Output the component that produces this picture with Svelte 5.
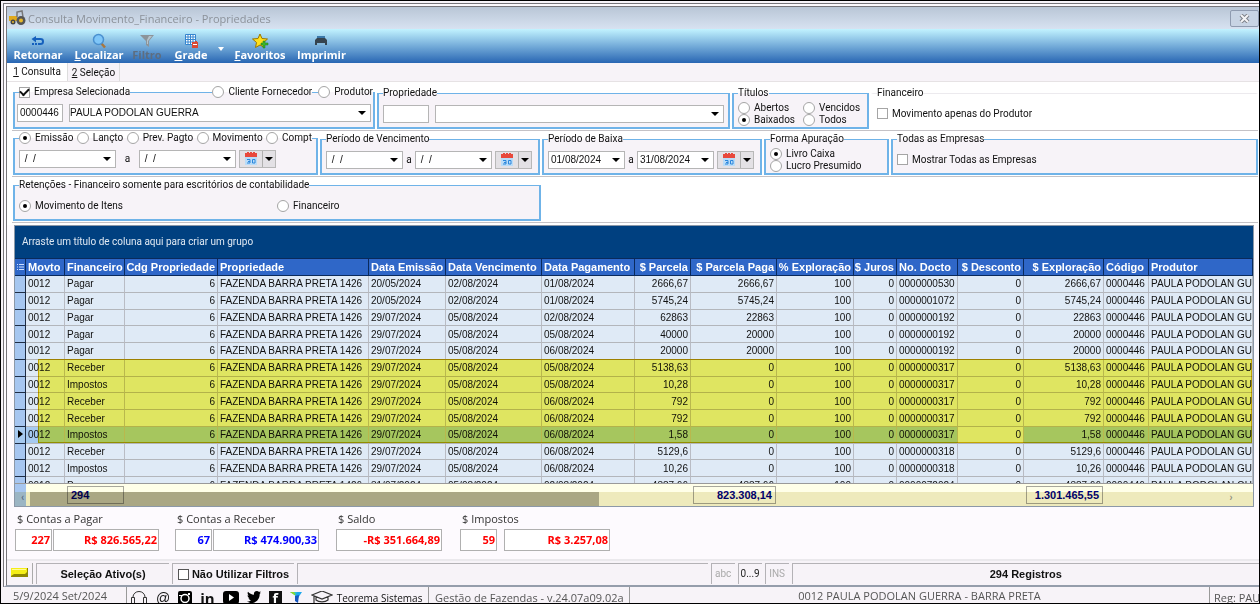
<script>
	let filters = $state({
		company: true,
		person: '',
		status: 'Baixados',
		date: 'Emissão',
		basis: 'Livro Caixa',
		withholding: 'Movimento de Itens',
		producerOnly: false,
		allCompanies: false,
		noFilters: false,
	});

	const columns = [
		{ title: 'Movto', width: 39 },
		{ title: 'Financeiro', width: 60 },
		{ title: 'Cdg Propriedade', width: 93, num: true },
		{ title: 'Propriedade', width: 151 },
		{ title: 'Data Emissão', width: 77 },
		{ title: 'Data Vencimento', width: 96 },
		{ title: 'Data Pagamento', width: 93 },
		{ title: '$ Parcela', width: 56, num: true },
		{ title: '$ Parcela Paga', width: 86, num: true },
		{ title: '% Exploração', width: 77, num: true },
		{ title: '$ Juros', width: 43, num: true },
		{ title: 'No. Docto', width: 61 },
		{ title: '$ Desconto', width: 66, num: true },
		{ title: '$ Exploração', width: 80, num: true },
		{ title: 'Código', width: 45 },
		{ title: 'Produtor' },
	];

	const footer = { 1: '294', 8: '823.308,14', 13: '1.301.465,55' };
	const template = '11px ' + columns.map((c) => (c.width ? c.width + 'px' : '1fr')).join(' ');

	const entries = [
		['Pagar', '20/05/2024', '02/08/2024', '01/08/2024', '2666,67', '2666,67', '0000000530', '2666,67'],
		['Pagar', '20/05/2024', '02/08/2024', '01/08/2024', '5745,24', '5745,24', '0000001072', '5745,24'],
		['Pagar', '29/07/2024', '05/08/2024', '02/08/2024', '62863', '22863', '0000000192', '22863'],
		['Pagar', '29/07/2024', '05/08/2024', '05/08/2024', '40000', '20000', '0000000192', '20000'],
		['Pagar', '29/07/2024', '05/08/2024', '06/08/2024', '20000', '20000', '0000000192', '20000'],
		['Receber', '29/07/2024', '05/08/2024', '05/08/2024', '5138,63', '0', '0000000317', '5138,63'],
		['Impostos', '29/07/2024', '05/08/2024', '05/08/2024', '10,28', '0', '0000000317', '10,28'],
		['Receber', '29/07/2024', '05/08/2024', '06/08/2024', '792', '0', '0000000317', '792'],
		['Receber', '29/07/2024', '05/08/2024', '06/08/2024', '792', '0', '0000000317', '792'],
		['Impostos', '29/07/2024', '05/08/2024', '06/08/2024', '1,58', '0', '0000000317', '1,58'],
		['Receber', '29/07/2024', '05/08/2024', '06/08/2024', '5129,6', '0', '0000000318', '5129,6'],
		['Impostos', '29/07/2024', '05/08/2024', '06/08/2024', '10,26', '0', '0000000318', '10,26'],
		['Pagar', '31/07/2024', '05/08/2024', '02/08/2024', '4387,66', '4387,66', '0000072024', '4387,66'],
	];
	const rows = entries.map(([kind, issued, due, paid, value, valuePaid, doc, share]) => [
		'0012', kind, '6', 'FAZENDA BARRA PRETA 1426', issued, due, paid, value, valuePaid,
		'100', '0', doc, '0', share, '0000446', 'PAULA PODOLAN GUERRA',
	]);
	let current = $state(9);

	const totals = [
		{ title: '$ Contas a Pagar', count: '227', value: 'R$ 826.565,22', width: 160 },
		{ title: '$ Contas a Receber', count: '67', value: 'R$ 474.900,33', width: 161, blue: true },
		{ title: '$ Saldo', value: '-R$ 351.664,89', width: 124 },
		{ title: '$ Impostos', count: '59', value: 'R$ 3.257,08', width: 151, wide: true },
	];
</script>

{#snippet radio(group, value)}
	<label class="opt"><input type="radio" name={group} {value} bind:group={filters[group]}>{value}</label>
{/snippet}

{#snippet dateBox(label, value)}
	<div class="combo">
		<input type="text" aria-label={label} {value}>
		<button class="arrow" aria-label="Abrir calendário"></button>
	</div>
{/snippet}

{#snippet calendar()}
	<div class="cal">
		<button aria-label="Escolher período">
			<svg width="14" height="13" viewBox="0 0 14 13">
				<path fill="#b9dcf8" d="M1 5h12v8H1z" />
				<path fill="#e8493c" d="M1 1h2V0h2v1h1V0h2v1h1V0h2v1h2v4H1z" />
				<path fill="none" stroke="#2a86dc" d="M3 7.5h3v3.500H3M4 9.500h2M8.500 7.500h2.500v3.500H8.500z" />
			</svg>
		</button>
		<button class="arrow" aria-label="Mais períodos"></button>
	</div>
{/snippet}

<div class="screen">
	<div class="window">
		<header class="title">
			<svg width="17" height="16" viewBox="0 0 17 16">
				<path fill="#e0a91c" d="M0 6h8v5H0z" />
				<path fill="none" stroke="#777" stroke-width="1.500" d="M8 7V2l5-1 1 6" />
				<circle cx="12" cy="10.500" r="4.500" fill="#555" /><circle cx="12" cy="10.500" r="2" fill="#e8b92c" />
				<circle cx="4" cy="12" r="2.500" fill="#444" /><circle cx="4" cy="12" r="1" fill="#e8b92c" />
			</svg>
			<h1>Consulta Movimento_Financeiro - Propriedades</h1>
			<button class="close" aria-label="Fechar">
				<svg width="11" height="9" viewBox="0 0 11 9">
					<path stroke="#7c8088" stroke-width="4" d="M2 1l7 7M9 1L2 8" />
					<path stroke="#f4f4f6" stroke-width="2" d="M2 1l7 7M9 1L2 8" />
				</svg>
			</button>
		</header>

		<nav class="toolbar">
			<button class="back">
				<svg width="16" height="16" viewBox="0 0 16 16">
					<path fill="#1560bd" d="M6 3v2h4c3 0 4 1 4 3.500S13 12 10 12H8V10h2c1.500 0 2-.5 2-1.500S11.500 7 10 7H6v2.500L1.500 6z" />
					<path fill="#1560bd" d="M2 10h2v2H2zM5 10h2v2H5z" />
				</svg>
				<span>Retornar</span>
			</button>
			<button class="find">
				<svg width="16" height="16" viewBox="0 0 16 16">
					<path stroke="#a9773e" stroke-width="2.500" d="M10 10l4 4.500" />
					<circle cx="7.500" cy="6.500" r="5" fill="#7fc6f8" stroke="#4a90cf" stroke-width="1.500" />
				</svg>
				<span><u>L</u>ocalizar</span>
			</button>
			<button class="filter" disabled>
				<svg width="16" height="16" viewBox="0 0 16 16">
					<path fill="#8c949a" d="M1 2h14L10 8v6l-3-2V8z" /><path fill="#b5c3cc" d="M10 3h3l-4 5v3H8V7z" />
				</svg>
				<span>Filtro</span>
			</button>
			<button class="grade">
				<svg width="16" height="16" viewBox="0 0 16 16">
					<path fill="#fff" stroke="#3585cf" d="M2.500 1.500h10v10h-10zM5 1.500v10M7.500 1.500v10M10 1.500v10M2.500 4h10M2.500 6.500h10M2.500 9h10" />
					<path fill="#d94a35" d="M9 9h3V8h2v1h1v6H9z" /><path fill="#fff" d="M10 11h4v1h-4z" />
				</svg>
				<span><u>G</u>rade</span>
			</button>
			<button class="more" aria-label="Mais opções de grade"></button>
			<button class="fav">
				<svg width="17" height="16" viewBox="0 0 17 16">
					<path fill="#ffe01b" stroke="#9a7600" d="M8 1l2 4.500 5.500.5-4 3.500 1 5L8 12l-4.500 2.500 1-5-4-3.500L6 5.500z" />
					<path fill="#3db32b" stroke="#1f7d18" stroke-width=".5" d="M11 8h2v2h3v2h-3v3h-2v-3H9v-2h2z" />
				</svg>
				<span><u>F</u>avoritos</span>
			</button>
			<button class="print">
				<svg width="16" height="16" viewBox="0 0 16 16">
					<path fill="#3b78a8" d="M4 3h8v4H4z" /><path fill="#36434e" d="M2 7l2-2h8l2 2v5H2z" /><path fill="#84b7dc" d="M4 10h8v2H4z" />
				</svg>
				<span>Imprimir</span>
			</button>
		</nav>

		<nav class="tabs">
			<button class="on"><u>1</u> Consulta</button>
			<button><u>2</u> Seleção</button>
		</nav>

		<form onsubmit={(e) => e.preventDefault()}>
			<div class="line">
				<fieldset class="company">
					<legend class="full">
						<label class="opt"><input type="checkbox" bind:checked={filters.company}>Empresa Selecionada</label>
						<i></i>
						{@render radio('person', 'Cliente Fornecedor')}
						<i class="short"></i>
						{@render radio('person', 'Produtor')}
					</legend>
					<div class="fields">
						<input class="code" type="text" aria-label="Código da empresa" value="0000446">
						<div class="combo grow">
							<select aria-label="Empresa"><option>PAULA PODOLAN GUERRA</option></select>
							<span class="arrow"></span>
						</div>
					</div>
				</fieldset>
				<fieldset class="property">
					<legend>Propriedade</legend>
					<div class="fields">
						<input class="code" type="text" aria-label="Código da propriedade">
						<div class="combo grow">
							<select aria-label="Propriedade"><option></option></select>
							<span class="arrow"></span>
						</div>
					</div>
				</fieldset>
				<fieldset class="status">
					<legend>Títulos</legend>
					<div class="options two">
						{@render radio('status', 'Abertos')}
						{@render radio('status', 'Vencidos')}
						{@render radio('status', 'Baixados')}
						{@render radio('status', 'Todos')}
					</div>
				</fieldset>
				<fieldset class="plain grow">
					<legend>Financeiro</legend>
					<label class="opt"><input type="checkbox" bind:checked={filters.producerOnly}>Movimento apenas do Produtor</label>
				</fieldset>
			</div>

			<div class="line">
				<fieldset class="period">
					<legend class="full kinds">
						{#each ['Emissão', 'Lançto', 'Prev. Pagto', 'Movimento', 'Compt'] as kind}
							{@render radio('date', kind)}
						{/each}
					</legend>
					<div class="fields dates">
						{@render dateBox('Data inicial', ' /  /')}
						<span>a</span>
						{@render dateBox('Data final', ' /  /')}
						{@render calendar()}
					</div>
				</fieldset>
				<fieldset class="due">
					<legend>Período de Vencimento</legend>
					<div class="fields dates">
						{@render dateBox('Vencimento inicial', ' /  /')}
						<span>a</span>
						{@render dateBox('Vencimento final', ' /  /')}
						{@render calendar()}
					</div>
				</fieldset>
				<fieldset class="due">
					<legend>Período de Baixa</legend>
					<div class="fields dates">
						{@render dateBox('Baixa inicial', '01/08/2024')}
						<span>a</span>
						{@render dateBox('Baixa final', '31/08/2024')}
						{@render calendar()}
					</div>
				</fieldset>
				<fieldset class="basis">
					<legend>Forma Apuração</legend>
					<div class="options">
						{@render radio('basis', 'Livro Caixa')}
						{@render radio('basis', 'Lucro Presumido')}
					</div>
				</fieldset>
				<fieldset class="all grow">
					<legend>Todas as Empresas</legend>
					<label class="opt"><input type="checkbox" bind:checked={filters.allCompanies}>Mostrar Todas as Empresas</label>
				</fieldset>
			</div>

			<div class="line">
				<fieldset class="withhold">
					<legend>Retenções - Financeiro somente para escritórios de contabilidade</legend>
					<div class="options halves">
						{@render radio('withholding', 'Movimento de Itens')}
						{@render radio('withholding', 'Financeiro')}
					</div>
				</fieldset>
			</div>
		</form>

		<section class="grid">
			<div class="group">Arraste um título de coluna aqui para criar um grupo</div>
			<div class="scroller">
				<table>
					<colgroup>
						<col style="width: 11px">
						{#each columns as col}
							<col style={col.width ? `width: ${col.width}px` : ''}>
						{/each}
					</colgroup>
					<thead>
						<tr>
							<th class="handle"><svg width="7" height="8" viewBox="0 0 7 8"><path stroke="#cfe0ff" d="M0 1.500h1M2 1.500h5M0 4h1M2 4h5M0 6.500h1M2 6.500h5" /></svg></th>
							{#each columns as col}
								<th class:num={col.num}>{col.title}</th>
							{/each}
						</tr>
					</thead>
					<tbody>
						{#each rows as row, i}
							<tr class:current={i === current} onclick={() => (current = i)}>
								<td class="handle"></td>
								{#each row as cell, c}
									<td class:num={columns[c].num} class:focus={c === 12}>{cell}</td>
								{/each}
							</tr>
						{/each}
					</tbody>
				</table>
				<div class="marker"></div>
			</div>
			<div class="sums" style="grid-template-columns: {template}">
				<span class="handle"></span>
				{#each columns as col, c}
					{#if footer[c]}
						<output class:num={col.num}>{footer[c]}</output>
					{:else}
						<span></span>
					{/if}
				{/each}
				<div class="hbar"><b>‹</b><div class="thumb"></div><b class="next">›</b></div>
			</div>
		</section>

		<section class="totals">
			{#each totals as t}
				<div class="total" class:blue={t.blue} class:wide={t.wide} style="width: {t.width}px">
					<h2>{t.title}</h2>
					<div>
						{#if t.count}<output class="qty">{t.count}</output>{/if}
						<output>{t.value}</output>
					</div>
				</div>
			{/each}
		</section>

		<footer class="status-bar">
			<button class="state" aria-label="Seleção"><svg width="17" height="9" viewBox="0 0 17 9"><path fill="#8f8700" d="M0 0h17v9H0z" /><path fill="#f5ee16" d="M0 0h16v4l-2 2H3l-3 2z" /><path fill="#fffb9c" d="M1 1h14v1H1z" /></svg></button>
			<span class="pane active">Seleção Ativo(s)</span>
			<span class="pane nofilter"><label class="opt"><input type="checkbox" bind:checked={filters.noFilters}>Não Utilizar Filtros</label></span>
			<span class="pane blank"></span>
			<span class="pane key">abc</span>
			<span class="pane key lit">0...9</span>
			<span class="pane key">INS</span>
			<span class="pane records">294 Registros</span>
		</footer>
	</div>

	<footer class="app-bar">
		<time>5/9/2024 Set/2024</time>
		<div class="links">
			<a href="#suporte" aria-label="Suporte"><svg width="18" height="17" viewBox="0 0 18 17"><path fill="none" stroke="#333" d="M3 7V6a6 5.500 0 0 1 12 0v1M1.500 6.500h3v6h-3zM13.500 6.500h3v6h-3z" /></svg></a>
			<a href="#email" class="at">@</a>
			<a href="#instagram" aria-label="Instagram"><svg width="14" height="14" viewBox="0 0 14 14"><rect width="14" height="14" rx="2" /><circle cx="7" cy="7.500" r="4" fill="none" stroke="#fff" stroke-width="1.500" /><path fill="#fff" d="M10 2h2v2h-2zM1 4h3v1H1z" /></svg></a>
			<a href="#linkedin" class="in">in</a>
			<a href="#youtube" aria-label="YouTube"><svg width="16" height="13" viewBox="0 0 16 13"><rect width="16" height="13" rx="3" /><path fill="#fff" d="M6 3l5 3.500L6 10z" /></svg></a>
			<a href="#twitter" aria-label="Twitter"><svg width="14" height="12" viewBox="0 0 14 12"><path d="M0 10.500c2 0 3-.4 4-1.200C2.700 9 2 8.300 1.500 7.200h1.200C1.200 6.700.6 5.500.6 4.200l1.200.4C.5 3.500.3 2 1 .8c1.600 1.800 3.500 2.800 6 3C6.600 1.500 8 0 9.800 0c1 0 1.600.3 2.200.9L13.700.3 12.700 2 14 1.600l-1.300 1.500C12.700 8 9.500 12 4.500 12 2.800 12 1.300 11.400 0 10.500z" /></svg></a>
			<a href="#facebook" class="fb">f</a>
			<a href="#teorema" aria-label="Teorema"><svg width="13" height="13" viewBox="0 0 13 13"><path fill="#35c6c0" d="M0 1h8L6 5z" /><path fill="#8bd82b" d="M0 1h4l2 4z" /><path fill="#1ca7ec" d="M7 1h5l-4 6-3-2z" /><path fill="#1557c0" d="M5 5l4-1-1 8-3-2z" /></svg></a>
			<a href="#cursos" aria-label="Cursos"><svg width="22" height="15" viewBox="0 0 22 15"><path fill="none" stroke="#333" stroke-width="1.200" d="M1 4l10-4 10 4-10 4zM5 6v3c3 2.500 9 2.500 12 0V6M3 5v7" /></svg></a>
			<a href="#empresa" class="brand">Teorema Sistemas</a>
		</div>
		<span class="version">Gestão de Fazendas - v.24.07a09.02a</span>
		<span class="site">0012 PAULA PODOLAN GUERRA - BARRA PRETA</span>
		<span class="reg">Reg: PAULA</span>
	</footer>
</div>

<style>
	:global(body) {
		margin: 0;
		overflow: hidden;
	}

	* {
		box-sizing: border-box;
	}

	.screen {
		display: flex;
		flex-direction: column;
		height: 100vh;
		min-height: 520px;
		border: 1px solid #000;
		background: #f7f3f8;
		font: 10px/14px Roboto, "Liberation Sans", sans-serif;
		color: #111;
	}

	button, input, select {
		font: inherit;
		color: inherit;
		margin: 0;
		padding: 0;
		border: 0;
		border-radius: 0;
		background: none;
	}

	.window {
		flex: 1;
		min-height: 0;
		display: flex;
		flex-direction: column;
		border-top: 4px double #77757a;
		border-left: 4px double #77757a;
		border-bottom: 2px solid #959dab;
		margin-left: 2px;
		margin-top: 2px;
		background: #fdfafe;
	}

	/* Title bar */
	.title {
		display: flex;
		align-items: center;
		height: 22px;
		padding-left: 2px;
		gap: 2px;
		background: linear-gradient(#b9c6d6, #d7e2f1);
	}

	h1 {
		flex: 1;
		margin: 0;
		padding-top: 2px;
		font: 11px/18px "Open Sans", sans-serif;
		color: #8c929a;
	}

	.close {
		display: flex;
		align-items: center;
		justify-content: center;
		width: 29px;
		height: 17px;
		border: 1px solid #8f9bb0;
		border-radius: 2px;
		background: #c8d4e4;
	}

	/* Toolbar */
	.toolbar {
		display: flex;
		height: 34px;
		padding-left: 4px;
		background: linear-gradient(#c2f3ff, #7cb3dd 45%, #2866b3);
		color: #fff;
		font: bold 11px/14px "Open Sans", sans-serif;
	}

	.toolbar button {
		display: flex;
		flex-direction: column;
		align-items: center;
		padding-top: 4px;
	}

	.toolbar span {
		line-height: 12px;
	}

	.back { width: 54px; }
	.find { width: 68px; }
	.filter { width: 28px; margin-right: 14px; }
	.grade { width: 32px; }

	.toolbar .filter {
		color: #5d6d80;
	}

	.toolbar .more {
		width: 28px;
		padding-top: 18px;
	}

	.more::before {
		content: "";
		border: 3px solid transparent;
		border-top: 4px solid #fff;
	}

	.fav { width: 50px; margin-right: 12px; }

	/* Tabs */
	.tabs {
		display: flex;
		height: 19px;
		background: #f7f3f8;
		border-bottom: 1px solid #e6e2e4;
	}

	.tabs button {
		width: 52px;
		padding-top: 2px;
		border-right: 1px solid #ddd;
	}

	.tabs .on {
		width: 61px;
		padding: 0;
		background: #fff;
	}

	/* Filters */
	form {
		padding: 3px 1px 2px 5px;
		background: #fff;
	}

	.line {
		display: flex;
		gap: 2px;
		height: 46px;
		padding: 1px 0 1px 1px;
		border-bottom: 1px solid #c4c2c6;
	}

	fieldset {
		display: flex;
		align-items: center;
		min-width: 0;
		margin: 0;
		padding: 0 4px;
		border: 2px solid #6fb3e8;
		border-top-width: 1px;
		background: #f7f3f8;
	}

	.grow { flex: 1; }
	.company { width: 362px; padding: 0 0 0 4px; }
	.property { width: 353px; }
	.status { width: 137px; }
	.period { width: 305px; }
	.due { width: 220px; }
	.basis { width: 125px; }
	.withhold { width: 528px; }

	.plain {
		border-color: transparent;
		border-top-color: #eceaee;
		background: #fff;
	}

	legend {
		padding: 0;
		line-height: 14px;
	}

	.full {
		display: flex;
		align-items: center;
		width: 100%;
		white-space: nowrap;
	}

	legend i {
		flex: 1;
		height: 1px;
		background: #6fb3e8;
	}

	legend .short {
		flex: 0 0 6px;
	}

	.kinds {
		justify-content: space-between;
	}

	.opt {
		display: flex;
		align-items: center;
		gap: 4px;
		line-height: 12px;
		white-space: nowrap;
	}

	.opt input {
		appearance: none;
		display: flex;
		align-items: center;
		justify-content: center;
		width: 11px;
		height: 11px;
		border: 1px solid #a5a5a5;
		background: #fff;
	}

	input[type=radio] {
		width: 12px;
		height: 12px;
		border-radius: 50%;
	}

	input[type=radio]:checked::before {
		content: "";
		width: 4px;
		height: 4px;
		border-radius: 50%;
		background: #000;
	}

	input[type=checkbox]:checked::before {
		content: "";
		flex: none;
		width: 7px;
		height: 4px;
		margin-bottom: 2px;
		border: solid #111;
		border-width: 0 0 2px 2px;
		rotate: -45deg;
	}

	.fields {
		flex: 1;
		display: flex;
		align-items: center;
		gap: 6px;
	}

	.company .fields {
		margin: 0 2px 0 -2px;
	}

	.code, .combo {
		height: 18px;
		border: 1px solid #b5b5b5;
		background: #fff;
		font-family: "Liberation Sans", sans-serif;
	}

	.code {
		width: 46px;
		padding: 0 2px;
	}

	.combo {
		display: flex;
	}

	.combo input, .combo select {
		flex: 1;
		width: 0;
		padding-left: 2px;
		appearance: none;
		white-space: pre;
	}

	.combo select {
		padding-left: 0;
	}

	.arrow {
		display: flex;
		align-items: center;
		justify-content: center;
		width: 17px;
	}

	.arrow::before {
		content: "";
		border: 4px solid transparent;
		border-top: 4px solid #000;
		border-bottom: 0;
	}

	.dates {
		gap: 3px;
	}

	.dates .combo {
		width: 77px;
	}

	.dates > span {
		width: 6px;
		text-align: center;
	}

	.period .combo {
		width: 97px;
	}

	.period .dates > span {
		width: 17px;
	}

	.cal {
		display: flex;
		height: 18px;
		border: 1px solid #b8b8b8;
		background: #e3e1e5;
	}

	.cal button:first-child {
		display: flex;
		align-items: center;
		padding: 0 4px;
	}

	.cal .arrow {
		width: 13px;
		border-left: 1px solid #b0b0b0;
	}

	.options.two {
		display: grid;
		grid-template-columns: 65px 1fr;
	}

	.halves {
		flex: 1;
		display: grid;
		grid-template-columns: 1fr 1fr;
	}

	/* Data grid */
	.grid {
		flex: 1;
		min-height: 0;
		display: flex;
		flex-direction: column;
		margin: 0 5px 0 7px;
		border: 1px solid #8c98a8;
	}

	.group {
		padding: 9px 7px;
		background: #004080;
		color: #dfe8f2;
	}

	.scroller {
		position: relative;
		flex: 1;
		overflow: hidden;
	}

	table {
		width: 100%;
		height: 236px;
		table-layout: fixed;
		border-collapse: separate;
		border-spacing: 0;
		font-family: "Liberation Sans", sans-serif;
	}

	th, td {
		padding: 0 2px;
		overflow: hidden;
		white-space: nowrap;
		text-align: left;
		line-height: 14px;
		border-right: 1px solid #b9bcc4;
		border-bottom: 1px solid #b3b6bb;
	}

	th {
		height: 18px;
		border: solid #0a2a5c;
		border-width: 1px 1px 1px 0;
		background: #2f67c8;
		color: #fff;
		font-size: 11px;
	}

	td {
		padding-top: 1px;
		background: #dfeaf6;
	}

	.num {
		text-align: right;
	}

	th.num {
		padding-left: 0;
	}

	.handle {
		padding: 0;
		text-align: center;
	}

	td.handle {
		background: #a6c6f0;
		border-color: #1d2c44;
	}

	.current td:not(.focus) {
		background: #a6caf0;
	}

	.current .handle::before {
		content: "";
		display: inline-block;
		border: 4px solid transparent;
		border-left: 5px solid #000;
		border-right: 0;
	}

	/* Highlighter over the rows of the same document */
	.marker {
		position: absolute;
		top: 101px;
		left: 23px;
		right: 1px;
		height: 84px;
		border: 1px solid #e0b400;
		background: #fffa64;
		mix-blend-mode: multiply;
		pointer-events: none;
	}

	.sums {
		position: relative;
		display: grid;
		height: 23px;
		border-top: 1px solid #9a9a9a;
		background: #ffffe8;
	}

	.sums .handle {
		background: #a6c6f0;
	}

	.sums output {
		height: 18px;
		margin: 2px 1px 0 2px;
		padding: 0 3px;
		border: 1px solid #a8a89c;
		color: #000080;
		font: bold 11px/16px "Liberation Sans", sans-serif;
	}

	.hbar {
		position: absolute;
		inset: 8px 0 0;
		display: flex;
		background: #eeeacf;
		mix-blend-mode: multiply;
		color: #888;
		line-height: 12px;
	}

	.hbar b {
		width: 15px;
		text-align: center;
	}

	.hbar .next {
		width: 44px;
		margin-left: auto;
	}

	.thumb {
		width: 46%;
		background: #aaa791;
	}

	/* Totals */
	.totals {
		display: flex;
		height: 52px;
		padding: 5px 0 0 8px;
		font: 11px/14px "Open Sans", sans-serif;
	}

	h2 {
		margin: 0;
		padding: 0 0 3px 2px;
		font: inherit;
		color: #333;
	}

	.total > div {
		display: flex;
		gap: 1px;
	}

	.total.wide > div {
		gap: 7px;
	}

	.total output {
		width: 106px;
		padding: 1px;
		border: 1px solid #b0b0b0;
		background: #fff;
		color: #f00;
		font-weight: bold;
		line-height: 18px;
		text-align: right;
	}

	.total .qty {
		width: 37px;
	}

	.total.blue output {
		color: #00f;
	}

	/* Status bar */
	.status-bar {
		display: flex;
		gap: 3px;
		height: 26px;
		padding: 2px 0 1px;
		border-top: 2px solid #ebe9ed;
		background: #f7f3f8;
	}

	.state {
		width: 26px;
		border-right: 1px solid #aaa;
	}

	.pane {
		display: flex;
		align-items: center;
		justify-content: center;
		border: solid #b4b2b6;
		border-width: 1px 0 0 1px;
		font: bold 11px/14px "Liberation Sans", sans-serif;
		white-space: nowrap;
	}

	.active { width: 133px; }
	.nofilter { width: 122px; }
	.blank { flex: 411; }
	.records { flex: 468; }
	.nofilter .opt { gap: 3px; }
	.nofilter input { border-color: #555; }

	.key {
		width: 24px;
		color: #aaa;
		font: 10px/14px Roboto, sans-serif;
	}

	.lit {
		color: #222;
	}

	/* Application bar */
	.app-bar {
		display: flex;
		height: 16px;
		padding-left: 12px;
		overflow: hidden;
		font: 11px/18px "Open Sans", sans-serif;
		color: #555;
		white-space: nowrap;
	}

	time {
		width: 114px;
		border-right: 1px solid #999;
	}

	.links {
		display: flex;
		align-items: flex-start;
		gap: 8px;
		width: 302px;
		padding: 4px 0 0 3px;
		border-right: 1px solid #999;
	}

	.links a {
		flex: none;
		color: #111;
		text-decoration: none;
	}

	.links svg {
		display: block;
	}

	.links .at {
		font: 14px/14px "Liberation Sans", sans-serif;
	}

	.links .in {
		font: bold 15px/14px "Open Sans", sans-serif;
	}

	.links .fb {
		width: 13px;
		height: 13px;
		background: #111;
		color: #fff;
		font: bold 14px/15px "Open Sans", sans-serif;
		text-align: center;
	}

	.links .brand {
		margin-left: -4px;
		font: 10px/14px "Open Sans", sans-serif;
	}

	.version {
		width: 201px;
		padding: 2px 0 0 6px;
		border-right: 1px solid #999;
	}

	.site {
		flex: 1;
		text-align: center;
	}

	.reg {
		width: 50px;
		padding: 2px 0 0 4px;
		overflow: hidden;
		border-left: 1px solid #999;
	}
</style>
